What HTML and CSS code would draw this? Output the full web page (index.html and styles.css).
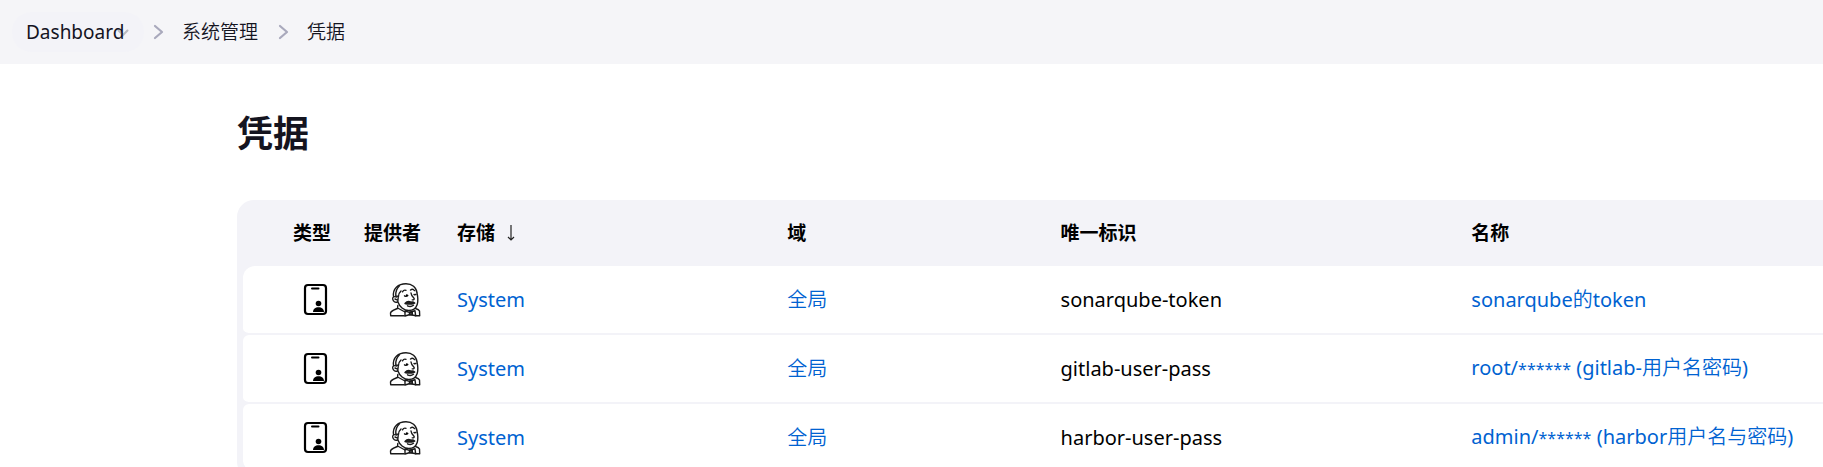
FILE: index.html
```
<!DOCTYPE html>
<html lang="zh-CN">
<head>
<meta charset="utf-8">
<title>凭据</title>
<link rel="stylesheet" href="styles.css">
</head>
<body>
<svg class="sprite" aria-hidden="true">
  <symbol id="chevron" viewBox="0 0 12 16"><path d="M3 2l7 6l-7 6" fill="none" stroke="currentColor" stroke-width="2.200" stroke-linecap="round" stroke-linejoin="round"/></symbol>
  <symbol id="id-card" viewBox="0 0 32 34">
    <rect x="6" y="2" width="21" height="29" rx="3" fill="none" stroke="#000" stroke-width="2.200"/>
    <path d="M13 5.500h6.500" stroke="#000" stroke-width="2" stroke-linecap="round"/>
    <circle cx="19.500" cy="20.500" r="2.800"/>
    <path d="M14 29c0-3 2.300-4.700 5.500-4.700s5.500 1.700 5.500 4.700z"/>
  </symbol>
  <symbol id="butler" viewBox="0 0 32 34">
    <g fill="none" stroke="#1a1a1a" stroke-width="1.400" stroke-linecap="round" stroke-linejoin="round">
      <path d="M4.500 13.500C3.500 6 9 .8 17 .8c6 0 10.500 3.500 11 9.200c.9 4 1.300 8 .2 11.500c-1.300 4-4.500 6-8.500 6c-5 0-9.200-4-10.800-8.500"/>
      <path d="M10.500 2.800C8 5 6.500 8.500 6.800 13l2.700.3c0-2.300.8-3.800 2.500-5.300"/>
      <path d="M7.500 14c-2.500-1-4.300.2-3.800 2.200c.5 2.300 2.300 3.600 4.800 2.800M6 16l2 .8M9.300 13.500l-.5 5"/>
      <path d="M13.500 8.800c.8-1.500 2-2 3.500-1.500M21.500 7c1.500-1 3-.7 4 .6"/>
      <path d="M15.500 12.800c1.200.8 2.400.7 3.300-.3M22 10c.2 2 1.200 3.600 3 5.200c.6 1-.2 1.800-1.800 1.700M25 11.500c.8.3 1.500.2 2-.3"/>
      <path d="M16 20.500c1.500-1.800 4-2.500 6-1.300c1.500-.4 2.700 0 3.700.8c-2.500 1-6.500 1.500-9.700.5z" fill="#222"/>
      <path d="M18.500 22.800c2 1 4.300.8 6-.5"/>
      <path d="M8.800 22.500l-.3 3c-3 1.300-6.300 2-7 4.500l.2 2.700h13.500M9.500 25.500l6.500 3.500M26.500 25.500c2 .5 3.500 1.200 4 2.500l.2 4.700h-4"/>
      <path d="M16 28l4.500 1.300l5.500-1.500l.7 5l-5.700-1.300l-5 1.500z"/>
      <path d="M20.500 29.200h2.800v2.700h-2.800z" fill="#444"/>
    </g>
    <circle cx="17.800" cy="12.300" r="1"/>
  </symbol>
</svg>

<nav class="breadcrumbs" aria-label="Breadcrumb">
  <a class="crumb crumb-home" href="#">Dashboard<svg class="crumb-menu" viewBox="0 0 12 8"><path d="M1.500 1.500L6 6l4.500-4.500" fill="none" stroke="currentColor" stroke-width="2" stroke-linecap="round"/></svg></a>
  <svg class="separator"><use href="#chevron"/></svg>
  <a class="crumb light" href="#">系统管理</a>
  <svg class="separator"><use href="#chevron"/></svg>
  <a class="crumb light" href="#">凭据</a>
</nav>

<main class="page">
  <h1 class="title">凭据</h1>
  <div class="table-frame">
    <table class="credentials">
      <colgroup>
        <col class="col-type"><col class="col-provider"><col class="col-store"><col class="col-domain"><col class="col-id"><col>
      </colgroup>
      <thead>
        <tr><th class="icon-cell">类型</th><th class="icon-cell">提供者</th><th>存储 <svg class="sort" viewBox="0 0 10 18"><path d="M5 1v15M2 13l3 3l3-3" fill="none" stroke="#222" stroke-width="1.200"/></svg></th><th>域</th><th>唯一标识</th><th>名称</th></tr>
      </thead>
      <tbody>
        <tr>
          <td class="icon-cell"><svg class="icon"><use href="#id-card"/></svg></td>
          <td class="icon-cell"><svg class="icon"><use href="#butler"/></svg></td>
          <td><a href="#">System</a></td><td class="light"><a href="#">全局</a></td><td>sonarqube-token</td><td><a href="#">sonarqube<span class="light">的</span>token</a></td>
        </tr>
        <tr>
          <td class="icon-cell"><svg class="icon"><use href="#id-card"/></svg></td>
          <td class="icon-cell"><svg class="icon"><use href="#butler"/></svg></td>
          <td><a href="#">System</a></td><td class="light"><a href="#">全局</a></td><td>gitlab-user-pass</td><td><a href="#">root/<span class="mask">******</span> (gitlab-<span class="light">用户名密码</span>)</a></td>
        </tr>
        <tr>
          <td class="icon-cell"><svg class="icon"><use href="#id-card"/></svg></td>
          <td class="icon-cell"><svg class="icon"><use href="#butler"/></svg></td>
          <td><a href="#">System</a></td><td class="light"><a href="#">全局</a></td><td>harbor-user-pass</td><td><a href="#">admin/<span class="mask">******</span> (harbor<span class="light">用户名与密码</span>)</a></td>
        </tr>
      </tbody>
    </table>
  </div>
</main>
</body>
</html>
```
FILE: styles.css
```
* { box-sizing: border-box; }
html { overflow: hidden; }
body {
  margin: 0;
  background: #fff;
  color: #000;
  font: 19px/24px "Noto Sans", "Noto Sans CJK SC", sans-serif;
}
a { color: #0062d1; text-decoration: none; }
.sprite { position: absolute; width: 0; height: 0; }
.light { font-weight: 350; }
.mask { font-size: 16px; }

.breadcrumbs {
  display: flex;
  align-items: center;
  height: 64px;
  padding-left: 12px;
  background: #f5f5f8;
}
.crumb { color: #14141f; }
.crumb-home {
  position: relative;
  width: 132px;
  padding: 8px 14px;
  border-radius: 20px;
  background: #f3f3f8;
}
.crumb-menu {
  position: absolute;
  right: 15px;
  top: 17px;
  width: 12px;
  height: 8px;
  color: #14141f;
  opacity: 0.25;
}
.separator { width: 12px; height: 16px; margin: 0 18px 0 19px; color: #a9a9bc; }
.crumb-home + .separator { margin-left: 8px; }

.page { padding: 48px 0 0 237px; }
.title { margin: 0 0 44px; color: #14141f; font-size: 36px; line-height: 44px; font-weight: 700; }

.table-frame {
  padding: 0 0 6px 6px;
  border-radius: 17px 0 0 17px;
  background: #f3f3f8;
}
.credentials { width: 100%; table-layout: fixed; border-spacing: 0; }
.col-type { width: 104px; }
.col-provider { width: 90px; }
.col-store { width: 20.9%; }
.col-domain { width: 17.3%; }
.col-id { width: 26%; }
th, td { padding: 0 16px 0 20px; text-align: left; white-space: nowrap; }
th { height: 66px; font-weight: 700; }
td { height: 69px; border-bottom: 2px solid #f3f3f8; background: #fff; background-clip: padding-box; font-size: 20px; }
td:first-child { border-radius: 6px 0 0 6px; }
tbody tr:first-child td:first-child { border-top-left-radius: 12px; }
tbody tr:last-child td:first-child { border-bottom-left-radius: 12px; }
.icon-cell { padding-left: 0; text-align: right; }
.icon { display: inline-block; width: 32px; height: 34px; vertical-align: middle; }
.sort { width: 10px; height: 18px; margin-left: 6px; vertical-align: -2px; }
```
